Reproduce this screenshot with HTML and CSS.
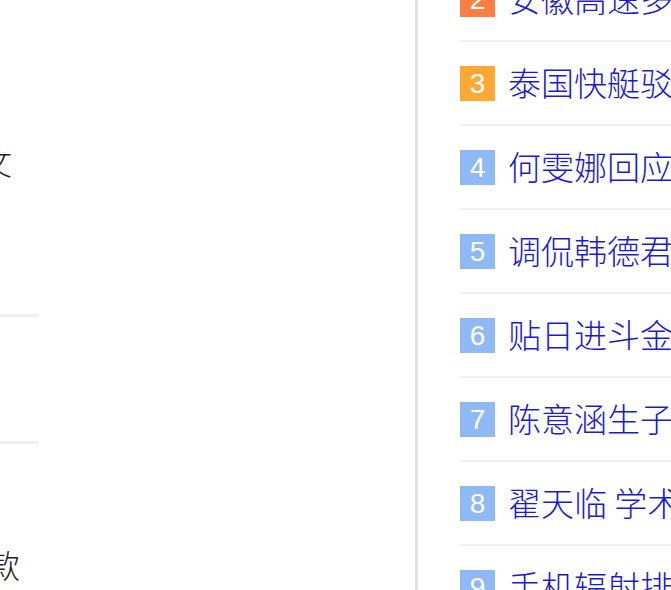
FILE: index.html
```html
<!DOCTYPE html>
<html lang="zh-CN">
<head>
<meta charset="utf-8">
<title>热搜</title>
<link rel="stylesheet" href="styles.css">
</head>
<body>
<div class="page">
  <section class="feed-col">
    <div class="feed">
      <div class="feed-item first">
        <p class="line line-a">查看原文</p>
      </div>
      <div class="feed-item blank"></div>
      <div class="feed-item last">
        <p class="line line-b">推荐新款</p>
      </div>
    </div>
  </section>
  <div class="divider"></div>
  <section class="hot-col">
    <ul class="hot-list">
      <li class="hot-item"><span class="rank r1">2</span><a class="title" href="#">安徽高速多车相撞</a></li>
      <li class="hot-item"><span class="rank r2">3</span><a class="title" href="#">泰国快艇驳船相撞</a></li>
      <li class="hot-item"><span class="rank">4</span><a class="title" href="#">何雯娜回应退赛</a></li>
      <li class="hot-item"><span class="rank">5</span><a class="title" href="#">调侃韩德君身高</a></li>
      <li class="hot-item"><span class="rank">6</span><a class="title" href="#">贴日进斗金</a></li>
      <li class="hot-item"><span class="rank">7</span><a class="title" href="#">陈意涵生子</a></li>
      <li class="hot-item"><span class="rank">8</span><a class="title" href="#">翟天临 学术不端</a></li>
      <li class="hot-item"><span class="rank">9</span><a class="title" href="#">手机辐射排行榜</a></li>
    </ul>
  </section>
</div>
</body>
</html>
```
FILE: styles.css
```css
html, body {
  margin: 0;
  padding: 0;
  background: #ffffff;
  overflow: hidden;
}

.page {
  display: flex;
  width: 671px;
  height: 590px;
  overflow: hidden;
}

.feed-col {
  flex: 0 0 415px;
  overflow: hidden;
}

.feed {
  width: 298px;
  margin-left: -260px;
}

.feed-item {
  border-bottom: 3px solid #efefef;
}

.feed-item.first {
  padding: 144px 0 130px;
}

.feed-item.blank {
  height: 124px;
}

.feed-item.last {
  border-bottom: none;
  padding-top: 103px;
}

.line {
  margin: 0;
  font-family: "Liberation Serif", "Noto Sans CJK SC", serif;
  font-size: 32px;
  font-weight: 300;
  line-height: 40px;
  color: #222222;
  white-space: nowrap;
  text-align: right;
}

.line-a {
  padding-right: 26px;
}

.line-b {
  padding-right: 18px;
}

.divider {
  flex: 0 0 3px;
  background: #e2e2e2;
}

.hot-col {
  flex: 1 1 auto;
  min-width: 0;
  padding-left: 42px;
  overflow: hidden;
}

.hot-list {
  list-style: none;
  margin: -42px 0 0;
  padding: 0;
}

.hot-item {
  display: flex;
  align-items: center;
  gap: 13px;
  padding: 24px 0 23px;
  border-bottom: 2px solid #f0f0f0;
  white-space: nowrap;
}

.rank {
  flex: 0 0 35px;
  height: 35px;
  display: flex;
  align-items: center;
  justify-content: center;
  background: #8eb9f5;
  color: #ffffff;
  font-family: "Liberation Sans", Arial, sans-serif;
  font-size: 28px;
  line-height: 35px;
}

.rank.r1 {
  background: #ff7f42;
}

.rank.r2 {
  background: #ffa834;
}

.title {
  margin-top: -3px;
  font-family: "Noto Sans CJK SC", sans-serif;
  font-size: 33px;
  font-weight: 300;
  line-height: 35px;
  color: #1a1ad4;
  text-decoration: none;
}
```
